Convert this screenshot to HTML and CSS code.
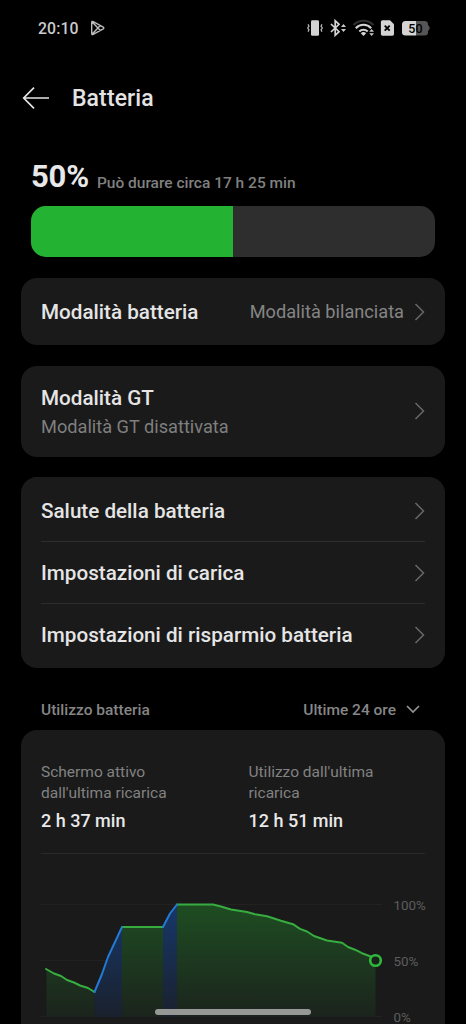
FILE: index.html
```html
<!DOCTYPE html>
<html lang="it">
<head>
<meta charset="utf-8">
<title>Batteria</title>
<link rel="stylesheet" href="styles.css">
</head>
<body>
<div class="screen">
  <div class="status">
    <span class="clock">20:10</span>
    <svg class="play" width="16" height="16" viewBox="0 0 16 16"><path d="M1.700 2.500Q1.700.8 3.200 1.600L12.800 6.800Q14.800 8 12.800 9.200L3.200 14.400Q1.700 15.200 1.700 13.500ZM2.200 2L10.300 10.600M2.200 14L10.300 5.400"/></svg>
    <svg class="icons" width="126" height="20" viewBox="306 18 126 20">
      <rect x="311" y="20.300" width="8" height="15.400" rx="1.300" fill="#d4d4d4"/>
      <path d="M308 24.300l1 1.800-1.300 1.900 1.300 1.900-1 1.800M322 24.300l-1 1.800 1.300 1.900-1.300 1.900 1 1.800" fill="none" stroke="#bbb" stroke-width="1.200"/>
      <path d="M331 24l8 7.700-3.800 3.600V20.700l3.800 3.600-8 7.700" fill="none" stroke="#d4d4d4" stroke-width="1.700"/>
      <path d="M341 27l2.500-2.900L346 27zM341 29l2.500 2.900L346 29z" fill="#c8c8c8"/>
      <path d="M353.500 25a14 14 0 0 1 20 0" fill="none" stroke="#303030" stroke-width="2"/>
      <path d="M355.800 28.200a10.500 10.500 0 0 1 15.400 0M359.300 31.500a6 6 0 0 1 8.400 0" fill="none" stroke="#d4d4d4" stroke-width="2"/>
      <path d="M360.800 33.200a4 4 0 0 1 5.400 0l-2.700 2.900z" fill="#d4d4d4"/>
      <path d="M369.200 31.800l2.400-2.700 2.400 2.700zM369.200 33.200l2.400 2.700 2.400-2.700z" fill="#c8c8c8"/>
      <path d="M382.500 20.300h7.500l4 4v9.800q0 1.600-1.600 1.600h-9.900q-1.600 0-1.600-1.600V21.900q0-1.600 1.600-1.600z" fill="#d4d4d4"/>
      <path d="M384.700 25.700l5 5M389.700 25.700l-5 5" stroke="#000" stroke-width="1.900"/>
      <path d="M416 21h8.500q3.500 0 3.500 3.500v8q0 3-3.500 3H416z" fill="#555"/><path d="M428 25q3.400 3 0 6z" fill="#555"/>
      <path d="M405.500 21H416v14.500h-10.500q-3.500 0-3.500-3v-8q0-3.500 3.500-3.500z" fill="#d4d4d4"/>
      <text x="408.300" y="32.600" class="bt">50</text>
    </svg>
  </div>

  <header class="header">
    <svg width="28" height="24" viewBox="0 0 28 24"><path d="M13 1.700L2.700 12 13 22.300M2.700 12H28" fill="none" stroke="#e4e4e4" stroke-width="1.700"/></svg>
    <h1>Batteria</h1>
  </header>

  <div class="level"><span class="percent">50%</span><span class="remaining">Può durare circa 17 h 25 min</span></div>
  <div class="bar"><div class="fill"></div></div>

  <section class="card mode">
    <span class="label">Modalità batteria</span>
    <span class="value">Modalità bilanciata</span>
    <svg class="chev" width="12" height="20" viewBox="0 0 12 20"><path d="M1.500 2L9.500 10l-8 8"/></svg>
  </section>

  <section class="card gt">
    <div class="stack"><span class="label">Modalità GT</span><span class="sub">Modalità GT disattivata</span></div>
    <svg class="chev" width="12" height="20" viewBox="0 0 12 20"><path d="M1.500 2L9.500 10l-8 8"/></svg>
  </section>

  <section class="card list">
    <div class="row"><span class="label">Salute della batteria</span><svg class="chev" width="12" height="20" viewBox="0 0 12 20"><path d="M1.500 2L9.500 10l-8 8"/></svg></div>
    <div class="row"><span class="label">Impostazioni di carica</span><svg class="chev" width="12" height="20" viewBox="0 0 12 20"><path d="M1.500 2L9.500 10l-8 8"/></svg></div>
    <div class="row"><span class="label">Impostazioni di risparmio batteria</span><svg class="chev" width="12" height="20" viewBox="0 0 12 20"><path d="M1.500 2L9.500 10l-8 8"/></svg></div>
  </section>

  <div class="heading">
    <span>Utilizzo batteria</span>
    <span class="range">Ultime 24 ore</span>
    <svg width="14" height="10" viewBox="0 0 14 10"><path d="M1 1l6 6 6-6" fill="none" stroke="#929292" stroke-width="1.700"/></svg>
  </div>

  <section class="card usage">
    <div class="stats">
      <div class="stat"><p>Schermo attivo<br>dall'ultima ricarica</p><strong>2 h 37 min</strong></div>
      <div class="stat"><p>Utilizzo dall'ultima<br>ricarica</p><strong>12 h 51 min</strong></div>
    </div>
    <svg class="chart" width="424" height="170" viewBox="21 854 424 170">
      <defs>
        <linearGradient id="green" gradientUnits="userSpaceOnUse" x1="0" y1="904" x2="0" y2="1024"><stop offset="0" stop-color="#1e4d22"/><stop offset="1" stop-color="#1b211c"/></linearGradient>
        <linearGradient id="blue" gradientUnits="userSpaceOnUse" x1="0" y1="904" x2="0" y2="1024"><stop offset="0" stop-color="#17386a"/><stop offset="1" stop-color="#1a1f29"/></linearGradient>
      </defs>
      <path d="M41 904.500H382M41 960.500H382M41 1016.500H382" stroke="#212121"/>
      <path d="M46.500 969.500L54 973.500 61 976 67 980 74 982.500 80 985.500 88 988 94.500 992V1017H46.500zM122 927h41v90h-41zM177 904.500h36l8 2 10 3 16 2.500 8 2.200 12 2 14 4.500 12 3.500 7 4.700 7 2.600 7 4.500 13 4.500 15 2.300 6 4.200 7 2.700 7 3.500 13.500 4.500V1017H177z" fill="url(#green)"/>
      <path d="M94.500 992L102 974l6-17 14-30v90H94.500zM163 927l7-13.500 7-9V1017h-14z" fill="url(#blue)"/>
      <path d="M46 969L54 973.500 61 976 67 980 74 982.500 80 985.500 88 988 94.500 992M122 927h41M177 904.500h36l8 2 10 3 16 2.500 8 2.200 12 2 14 4.500 12 3.500 7 4.700 7 2.600 7 4.500 13 4.500 15 2.300 6 4.200 7 2.700 7 3.500 10 3.800" class="line drain"/>
      <path d="M94.500 992L102 974l6-17 14-30M163 927l7-13.500 7-9" class="line charge"/>
      <circle cx="375.500" cy="960.500" r="5.300" fill="#1a211b" stroke="#2eb93b" stroke-width="2.600"/>
      <g class="axis"><text x="393.500" y="910">100%</text><text x="393.500" y="966">50%</text><text x="393.500" y="1022">0%</text></g>
    </svg>
  </section>
  <div class="home"></div>
</div>
</body>
</html>
```
FILE: styles.css
```css
* { box-sizing: border-box; }
body { margin: 0; background: #000; font-family: Roboto, sans-serif; }
.screen { position: relative; width: 466px; height: 1024px; overflow: hidden; padding: 0 21px; background: #000; }
.status { display: flex; align-items: center; height: 56px; padding: 0 13px 0 17px; }
.clock { color: #cbcbcb; font-size: 15.800px; font-weight: 500; letter-spacing: .1px; }
.play { margin-left: 11px; fill: none; stroke: #bbb; stroke-width: 1.4; }
.icons { margin-left: auto; }
.bt { font: 500 12.500px Roboto, sans-serif; fill: #000; }
.header { display: flex; align-items: center; height: 84px; }
h1 { margin: 0 0 0 23px; color: #e4e4e4; font-size: 23px; font-weight: 500; letter-spacing: .1px; }
.level { display: flex; align-items: baseline; height: 66px; padding: 18px 10px 0; }
.percent { font-size: 31px; line-height: 37px; font-weight: 700; letter-spacing: -.2px; color: #e8e8e8; }
.remaining { position: relative; top: 1px; margin-left: 8px; font-size: 15.500px; font-weight: 500; color: #808080; }
.bar { height: 51px; margin: 0 10px 21px; border-radius: 15px; overflow: hidden; background: #2e2e2e; }
.fill { width: 50%; height: 100%; background: #24b232; }
.card { display: flex; background: #1a1a1a; border-radius: 16px; }
.label { color: #e5e5e5; font-size: 20.650px; line-height: 24px; font-weight: 500; }
.chev { flex: none; fill: none; stroke: #686868; stroke-width: 1.5; }
.mode { height: 67px; align-items: center; padding: 0 19px 0 20px; margin-bottom: 20.500px; }
.value { margin: 0 10px 0 auto; color: #858585; font-size: 18.200px; }
.gt { height: 91px; align-items: center; justify-content: space-between; padding: 0 19px 0 20px; margin-bottom: 20.500px; }
.stack { display: flex; flex-direction: column; gap: 5px; padding-top: 2px; }
.sub { color: #7f7f7f; font-size: 18.200px; line-height: 24px; }
.list { height: 191px; flex-direction: column; padding: 3px 20px; }
.row { display: flex; align-items: center; justify-content: space-between; height: 62px; }
.row:first-child { height: 61px; }
.row .chev { margin-right: -1px; }
.row + .row { border-top: 1px solid #2d2d2d; }
.heading { display: flex; align-items: center; height: 62px; padding: 21px 25px 0 20px; color: #868686; font-size: 15.500px; font-weight: 500; }
.range { margin: 0 10px 0 auto; }
.usage { flex-direction: column; height: 310px; }
.stats { display: grid; grid-template-columns: 207.500px 1fr; height: 124px; margin: 0 20px; padding-top: 32px; border-bottom: 1px solid #292929; }
.stat p { margin: 0 0 6px; color: #828282; font-size: 15.500px; line-height: 21px; }
.stat strong { display: block; color: #e8e8e8; font-size: 18px; line-height: 22px; font-weight: 500; }
.chart { flex: none; }
.line { fill: none; stroke-width: 2; stroke-linejoin: round; stroke-linecap: round; }
.drain { stroke: #37ad40; }
.charge { stroke: #2379d5; }
.axis { font-size: 13.400px; fill: #5d5d5d; }
.home { position: absolute; left: 155px; top: 1009px; width: 156px; height: 6px; border-radius: 3px; background: #969896; }
```
